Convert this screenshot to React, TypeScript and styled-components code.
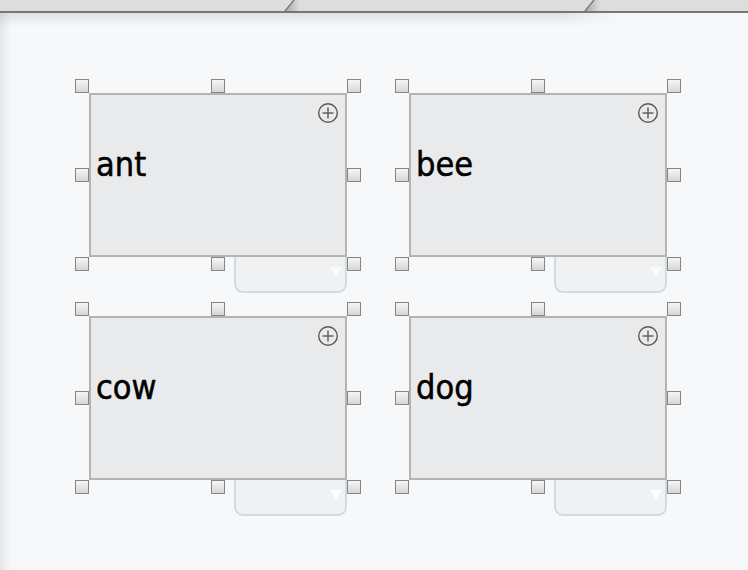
import React from "react";
import styled, { createGlobalStyle } from "styled-components";

const Global = createGlobalStyle`
  html, body { margin: 0; padding: 0; }
  body {
    width: 748px;
    height: 570px;
    overflow: hidden;
    background: #f7f8fa;
    font-family: "DejaVu Sans Condensed", "DejaVu Sans", sans-serif;
  }
`;

const Page = styled.div`
  width: 748px;
  height: 570px;
  display: flex;
  flex-direction: column;
`;

const TabBar = styled.div`
  height: 11px;
  display: flex;
  background: #dddddd;
  border-bottom: 2px solid #767676;
  flex: none;
`;

const Tab = styled.div<{ $w: number }>`
  width: ${(p) => p.$w}px;
  flex: none;
  display: flex;
  justify-content: flex-end;
`;

const Main = styled.div`
  position: relative;
  flex: 1;
  padding: 80px 0 0 89px;
  background-color: #f7f8fa;
  background-image: linear-gradient(to right, rgba(0, 0, 0, 0.07), rgba(0, 0, 0, 0) 12px);
  background-size: 12px 100%;
  background-repeat: no-repeat;

  &::before {
    content: "";
    position: absolute;
    left: 0;
    top: 0;
    width: 620px;
    height: 14px;
    background: linear-gradient(to bottom, rgba(0, 0, 0, 0.09), rgba(0, 0, 0, 0));
    -webkit-mask-image: linear-gradient(to right, #000 560px, transparent 620px);
    mask-image: linear-gradient(to right, #000 560px, transparent 620px);
    pointer-events: none;
  }
`;

const Grid = styled.div`
  display: grid;
  grid-template-columns: 258px 258px;
  column-gap: 62px;
  row-gap: 23px;
`;

const Widget = styled.div`
  display: flex;
  flex-direction: column;
  align-items: flex-end;
`;

const Card = styled.div`
  position: relative;
  box-sizing: border-box;
  width: 258px;
  height: 164px;
  border: 2px solid #b4b4b4;
  background: #e9eaec;
  display: flex;
  align-items: center;
  padding: 0 0 22px 5px;
  font-size: 34px;
  color: #000;
  align-self: stretch;
`;

const Label = styled.span`
  line-height: 1;
  -webkit-text-stroke: 0.5px #000;
`;

const AddButton = styled.svg`
  position: absolute;
  top: 7px;
  right: 6px;
  width: 22px;
  height: 22px;
`;

const Handle = styled.div<{ $x: number; $y: number }>`
  position: absolute;
  box-sizing: border-box;
  width: 14px;
  height: 14px;
  left: ${(p) => p.$x}px;
  top: ${(p) => p.$y}px;
  border: 1px solid #868686;
  background: linear-gradient(to bottom, #f6f6f6, #d6d6d6);
  z-index: 2;
`;

const Dropdown = styled.div`
  box-sizing: border-box;
  width: 113px;
  height: 36px;
  border: 2px solid #d2dbe0;
  border-top: none;
  border-radius: 0 0 9px 9px;
  background: #eff1f3;
  display: flex;
  justify-content: flex-end;
  align-items: flex-start;
  padding: 10px 3px 0 0;
`;

const Arrow = styled.svg`
  width: 12px;
  height: 10px;
`;

const handlePositions: [number, number][] = [
  [-16, -16], [120, -16], [256, -16],
  [-16, 73], [256, 73],
  [-16, 162], [120, 162], [256, 162],
];

function TabEdge() {
  return (
    <svg width="16" height="11" viewBox="0 0 16 11">
      <defs>
        <linearGradient id="te" x1="0" x2="1" y1="0" y2="0">
          <stop offset="0" stopColor="#a8a8a8" />
          <stop offset="1" stopColor="#dddddd" />
        </linearGradient>
      </defs>
      <polygon points="1,11 10,0 16,0 16,11" fill="url(#te)" />
      <line x1="0.5" y1="11.5" x2="10" y2="0" stroke="#6e6e6e" strokeWidth="1.2" />
    </svg>
  );
}

function Item({ name }: { name: string }) {
  return (
    <Widget>
      <Card>
        <Label>{name}</Label>
        <AddButton viewBox="0 0 22 22">
          <circle cx="11" cy="11" r="9.3" fill="none" stroke="#5a5a5a" strokeWidth="1.4" />
          <line x1="11" y1="5.5" x2="11" y2="16.5" stroke="#5a5a5a" strokeWidth="1.4" />
          <line x1="5.5" y1="11" x2="16.5" y2="11" stroke="#5a5a5a" strokeWidth="1.4" />
        </AddButton>
        {handlePositions.map(([x, y], i) => (
          <Handle key={i} $x={x} $y={y} />
        ))}
      </Card>
      <Dropdown>
        <Arrow viewBox="0 0 12 10">
          <polygon points="0,0 12,0 6,10" fill="#fbfcfd" />
        </Arrow>
      </Dropdown>
    </Widget>
  );
}

export default function App() {
  return (
    <Page>
      <Global />
      <TabBar>
        <Tab $w={300}><TabEdge /></Tab>
        <Tab $w={300}><TabEdge /></Tab>
        <Tab $w={148} />
      </TabBar>
      <Main>
        <Grid>
          {["ant", "bee", "cow", "dog"].map((n) => (
            <Item key={n} name={n} />
          ))}
        </Grid>
      </Main>
    </Page>
  );
}
